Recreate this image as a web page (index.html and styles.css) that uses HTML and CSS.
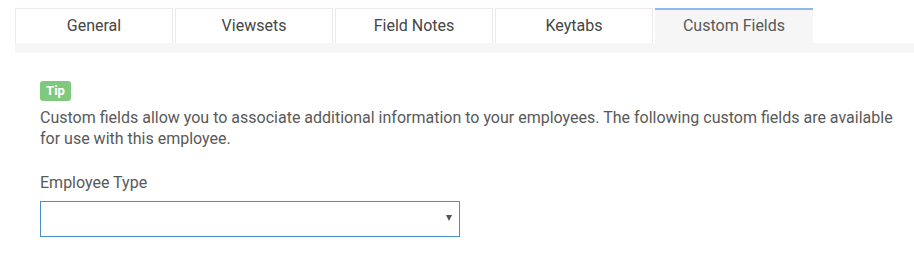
FILE: index.html
```html
<!DOCTYPE html>
<html lang="en">
<head>
    <meta charset="UTF-8">
    <title>Employee - Custom Fields</title>
    <link rel="stylesheet" href="styles.css">
</head>
<body>

<div class="tabs">
    <ul class="tab-list">
        <li class="tab">General</li>
        <li class="tab">Viewsets</li>
        <li class="tab">Field Notes</li>
        <li class="tab">Keytabs</li>
        <li class="tab active">Custom Fields</li>
    </ul>
    <div class="tab-strip"></div>
</div>

<div class="panel">
    <span class="badge">Tip</span>
    <p class="help">Custom fields allow you to associate additional information to your employees. The following custom fields are available for use with this employee.</p>

    <div class="field">
        <label for="employeeType">Employee Type</label>
        <div class="select-wrap">
            <select id="employeeType" name="employeeType">
                <option value=""></option>
            </select>
            <span class="select-arrow"></span>
        </div>
    </div>
</div>

</body>
</html>
```

FILE: styles.css
```css
body {
    margin: 0;
    font-family: Roboto, "Liberation Sans", sans-serif;
    color: #595959;
    background: #fff;
}

.tabs {
    padding: 8px 0 0 15px;
}
.tab-list {
    display: flex;
    gap: 2px;
    margin: 0;
    padding: 0;
    list-style: none;
}
.tab {
    width: 156px;
    height: 34px;
    border: 1px solid #efe9eb;
    border-bottom: none;
    text-align: center;
    line-height: 34px;
    font-size: 16px;
    color: #454545;
    background: #fff;
}
.tab.active {
    background: #f6f6f6;
    border: none;
    border-top: 2px solid #8db8ee;
    width: 158px;
    height: 33px;
    line-height: 32px;
    color: #595959;
}
.tab-strip {
    height: 10px;
    background: #f6f6f6;
}

.panel {
    padding: 28px 15px 0 40px;
}
.badge {
    display: inline-block;
    width: 31px;
    height: 20px;
    line-height: 20px;
    text-align: center;
    background: #7fc97f;
    color: #fff;
    font-size: 13px;
    font-weight: bold;
    border-radius: 3px;
    vertical-align: top;
}
.help {
    margin: 6px 0 0;
    font-size: 16px;
    line-height: 21px;
}

.field {
    margin-top: 24px;
}
.field label {
    display: block;
    font-size: 16px;
    line-height: 20px;
    margin-bottom: 8px;
}
.select-wrap {
    position: relative;
    width: 420px;
}
.select-wrap select {
    display: block;
    width: 420px;
    height: 36px;
    margin: 0;
    border: 1px solid #4a8fca;
    border-radius: 0;
    background: #fff;
    appearance: none;
    -webkit-appearance: none;
    font-family: inherit;
    font-size: 14px;
}
.select-arrow {
    position: absolute;
    right: 8px;
    top: 14px;
    border-left: 3px solid transparent;
    border-right: 3px solid transparent;
    border-top: 6px solid #555;
}
```
